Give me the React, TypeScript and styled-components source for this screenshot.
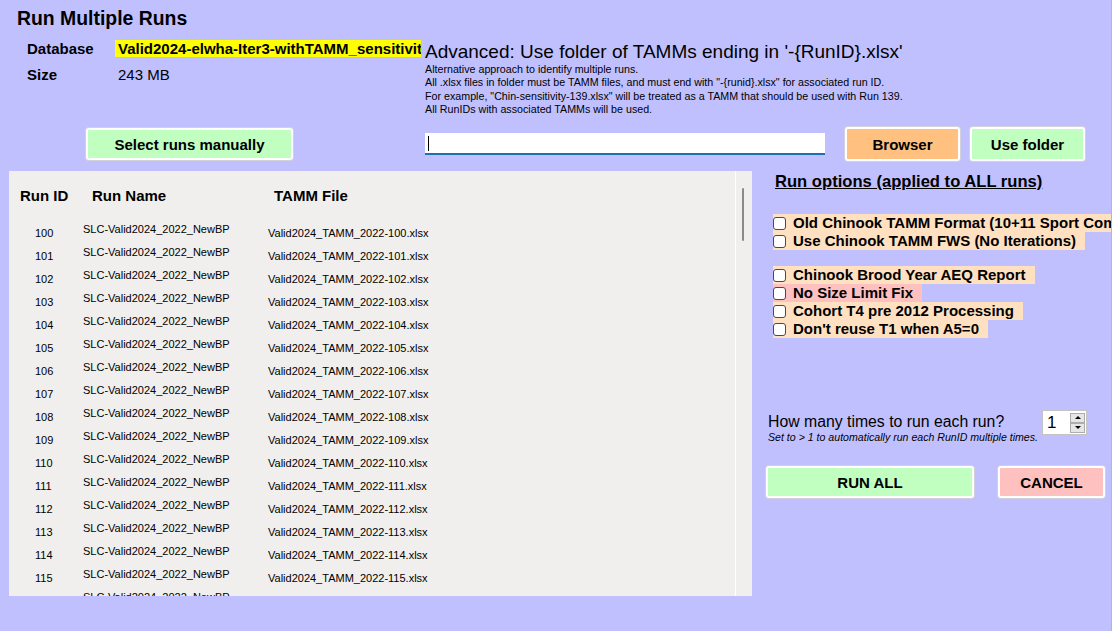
import styled, { createGlobalStyle } from 'styled-components'

const GlobalStyle = createGlobalStyle`
  html, body {
    margin: 0;
    padding: 0;
  }
  body {
    font-family: "Liberation Sans", Arial, sans-serif;
    color: #000;
  }
`

const Page = styled.div`
  box-sizing: border-box;
  width: 1112px;
  height: 631px;
  overflow: hidden;
  background: #c0c0ff;
  border-right: 1px solid #b6b6ca;
`

const Top = styled.div`
  display: grid;
  grid-template-columns: 425px 1fr;
  height: 127px;
`

const Title = styled.h1`
  margin: 0;
  padding: 7px 0 0 17px;
  font-size: 19.4px;
  line-height: 22px;
  font-weight: 700;
`

const Info = styled.div`
  display: grid;
  grid-template-columns: 88px 306px;
  grid-auto-rows: 17px;
  row-gap: 9px;
  margin: 11px 0 0 27px;
  font-size: 15px;
  line-height: 17px;
`

const InfoLabel = styled.div`
  font-weight: 700;
`

const InfoValue = styled.div<{ $highlight?: boolean }>`
  padding-left: 3px;
  white-space: nowrap;
  overflow: hidden;
  font-weight: ${(p) => (p.$highlight ? 700 : 400)};
  background: ${(p) => (p.$highlight ? '#ffff00' : 'transparent')};
`

const Advanced = styled.div`
  padding-top: 41px;
  white-space: nowrap;
`

const AdvTitle = styled.div`
  font-size: 19px;
  line-height: 22px;
`

const AdvNote = styled.div`
  font-size: 10.7px;
  line-height: 13.3px;
`

const ToolRow = styled.div`
  display: flex;
  align-items: center;
  height: 34px;
  padding-left: 86px;
`

const Button = styled.button<{ $bg: string; $w: number; $h: number; $gap?: number }>`
  box-sizing: border-box;
  flex-shrink: 0;
  width: ${(p) => p.$w}px;
  height: ${(p) => p.$h}px;
  margin-left: ${(p) => p.$gap || 0}px;
  padding: 0;
  border: 2px solid #fff;
  border-radius: 3px;
  box-shadow: 0 0 0 1px #d2d2dc;
  background: ${(p) => p.$bg};
  color: #000;
  font: 700 15px "Liberation Sans", Arial, sans-serif;
`

const TextBox = styled.div`
  box-sizing: border-box;
  display: flex;
  align-items: center;
  width: 400px;
  height: 22px;
  margin-left: 132px;
  padding-left: 3px;
  background: #fff;
  border-bottom: 2px solid #1f6fb5;
`

const Caret = styled.span`
  width: 1px;
  height: 15px;
  background: #000;
`

const Main = styled.div`
  display: flex;
  align-items: flex-start;
  margin-top: 10px;
  padding-left: 9px;
`

const ListPanel = styled.div`
  display: flex;
  flex-shrink: 0;
  width: 743px;
  height: 425px;
  background: #f0efed;
`

const ListBody = styled.div`
  flex: 1;
  overflow: hidden;
  padding-top: 16px;
`

const ListHead = styled.div`
  display: grid;
  grid-template-columns: 72px 182px 1fr;
  padding-left: 11px;
  font-size: 15px;
  line-height: 18px;
  font-weight: 700;
`

const Rows = styled.div`
  margin-top: 18px;
`

const Row = styled.div`
  display: grid;
  grid-template-columns: 48px 185px 1fr;
  height: 23px;
  padding-left: 26px;
  font-size: 11px;
  line-height: 13px;
  white-space: nowrap;
`

const Cell = styled.div<{ $low?: boolean }>`
  padding-top: ${(p) => (p.$low ? 4 : 0)}px;
`

const ScrollTrack = styled.div`
  box-sizing: border-box;
  width: 17px;
  padding: 17px 0 0 6px;
  border-left: 1px solid #fff;
`

const ScrollThumb = styled.div`
  width: 2px;
  height: 53px;
  background: #8a8a8a;
  border-radius: 1px;
`

const Side = styled.div`
  display: flex;
  flex-direction: column;
  align-items: flex-start;
  flex: 1;
  min-width: 0;
  margin-left: 14px;
  white-space: nowrap;
`

const OptionsTitle = styled.div`
  margin: 1px 0 0 9px;
  font-size: 16.6px;
  line-height: 19px;
  font-weight: 700;
  text-decoration: underline;
`

const OptionGroup = styled.div<{ $gap: number }>`
  display: flex;
  flex-direction: column;
  align-items: flex-start;
  margin-top: ${(p) => p.$gap}px;
  padding-left: 7px;
`

const Option = styled.label<{ $tone: string }>`
  display: inline-flex;
  align-items: center;
  height: 18px;
  padding-right: 9px;
  background: ${(p) => p.$tone};
  font-size: 15px;
  line-height: 18px;
  font-weight: 700;
`

const Check = styled.span`
  box-sizing: border-box;
  width: 13px;
  height: 13px;
  margin-right: 7px;
  border: 1px solid #4a4a4a;
  border-radius: 3px;
  background: #fff;
`

const SpinRow = styled.div`
  display: grid;
  grid-template-columns: 274px 45px;
  margin-top: 72px;
  padding-left: 2px;
`

const SpinText = styled.div`
  padding-top: 2px;
`

const SpinQuestion = styled.div`
  font-size: 15.8px;
  line-height: 19px;
`

const SpinHint = styled.div`
  font-size: 10.6px;
  line-height: 12px;
  font-style: italic;
`

const SpinBox = styled.div`
  box-sizing: border-box;
  display: flex;
  align-items: center;
  justify-content: space-between;
  width: 45px;
  height: 25px;
  padding: 0 1px 0 4px;
  border: 1px solid #c4c4c4;
  background: #fff;
  font-size: 17px;
`

const Spinner = styled.div`
  display: flex;
  flex-direction: column;
`

const SpinButton = styled.div<{ $down?: boolean }>`
  box-sizing: border-box;
  display: flex;
  align-items: center;
  justify-content: center;
  width: 15px;
  height: 10px;
  background: #e6e6e6;
  border: 1px solid #adadad;

  &::after {
    content: '';
    border-left: 3px solid transparent;
    border-right: 3px solid transparent;
    ${(p) => (p.$down ? 'border-top: 3px solid #000;' : 'border-bottom: 3px solid #000;')}
  }
`

const ActionRow = styled.div`
  display: flex;
  gap: 24px;
  margin-top: 23px;
`

const runs = Array.from({ length: 17 }, (_, i) => 100 + i)

const advNotes = [
  'Alternative approach to identify multiple runs.',
  'All .xlsx files in folder must be TAMM files, and must end with "-{runid}.xlsx" for associated run ID.',
  'For example, "Chin-sensitivity-139.xlsx" will be treated as a TAMM that should be used with Run 139.',
  'All RunIDs with associated TAMMs will be used.',
]

const peach = '#ffe0c0'
const pink = '#ffc0c0'

export default function App() {
  return (
    <>
      <GlobalStyle />
      <Page>
        <Top>
          <div>
            <Title>Run Multiple Runs</Title>
            <Info>
              <InfoLabel>Database</InfoLabel>
              <InfoValue $highlight>Valid2024-elwha-Iter3-withTAMM_sensitivity</InfoValue>
              <InfoLabel>Size</InfoLabel>
              <InfoValue>243 MB</InfoValue>
            </Info>
          </div>
          <Advanced>
            <AdvTitle>{"Advanced: Use folder of TAMMs ending in '-{RunID}.xlsx'"}</AdvTitle>
            {advNotes.map((n) => (
              <AdvNote key={n}>{n}</AdvNote>
            ))}
          </Advanced>
        </Top>

        <ToolRow>
          <Button $bg="#c0ffc0" $w={207} $h={32}>
            Select runs manually
          </Button>
          <TextBox>
            <Caret />
          </TextBox>
          <Button $bg="#ffc080" $w={115} $h={34} $gap={20}>
            Browser
          </Button>
          <Button $bg="#c0ffc0" $w={115} $h={34} $gap={10}>
            Use folder
          </Button>
        </ToolRow>

        <Main>
          <ListPanel>
            <ListBody>
              <ListHead>
                <div>Run ID</div>
                <div>Run Name</div>
                <div>TAMM File</div>
              </ListHead>
              <Rows>
                {runs.map((id) => (
                  <Row key={id}>
                    <Cell $low>{id}</Cell>
                    <Cell>SLC-Valid2024_2022_NewBP</Cell>
                    <Cell $low>Valid2024_TAMM_2022-{id}.xlsx</Cell>
                  </Row>
                ))}
              </Rows>
            </ListBody>
            <ScrollTrack>
              <ScrollThumb />
            </ScrollTrack>
          </ListPanel>

          <Side>
            <OptionsTitle>Run options (applied to ALL runs)</OptionsTitle>
            <OptionGroup $gap={23}>
              <Option $tone={peach}>
                <Check />
                Old Chinook TAMM Format (10+11 Sport Comps)
              </Option>
              <Option $tone={peach}>
                <Check />
                Use Chinook TAMM FWS (No Iterations)
              </Option>
            </OptionGroup>
            <OptionGroup $gap={16}>
              <Option $tone={peach}>
                <Check />
                Chinook Brood Year AEQ Report
              </Option>
              <Option $tone={pink}>
                <Check />
                No Size Limit Fix
              </Option>
              <Option $tone={peach}>
                <Check />
                Cohort T4 pre 2012 Processing
              </Option>
              <Option $tone={peach}>
                <Check />
                Don't reuse T1 when A5=0
              </Option>
            </OptionGroup>

            <SpinRow>
              <SpinText>
                <SpinQuestion>How many times to run each run?</SpinQuestion>
                <SpinHint>Set to {'>'} 1 to automatically run each RunID multiple times.</SpinHint>
              </SpinText>
              <SpinBox>
                1
                <Spinner>
                  <SpinButton />
                  <SpinButton $down />
                </Spinner>
              </SpinBox>
            </SpinRow>

            <ActionRow>
              <Button $bg="#c0ffc0" $w={208} $h={32}>
                RUN ALL
              </Button>
              <Button $bg="#ffc0c0" $w={107} $h={32}>
                CANCEL
              </Button>
            </ActionRow>
          </Side>
        </Main>
      </Page>
    </>
  )
}
